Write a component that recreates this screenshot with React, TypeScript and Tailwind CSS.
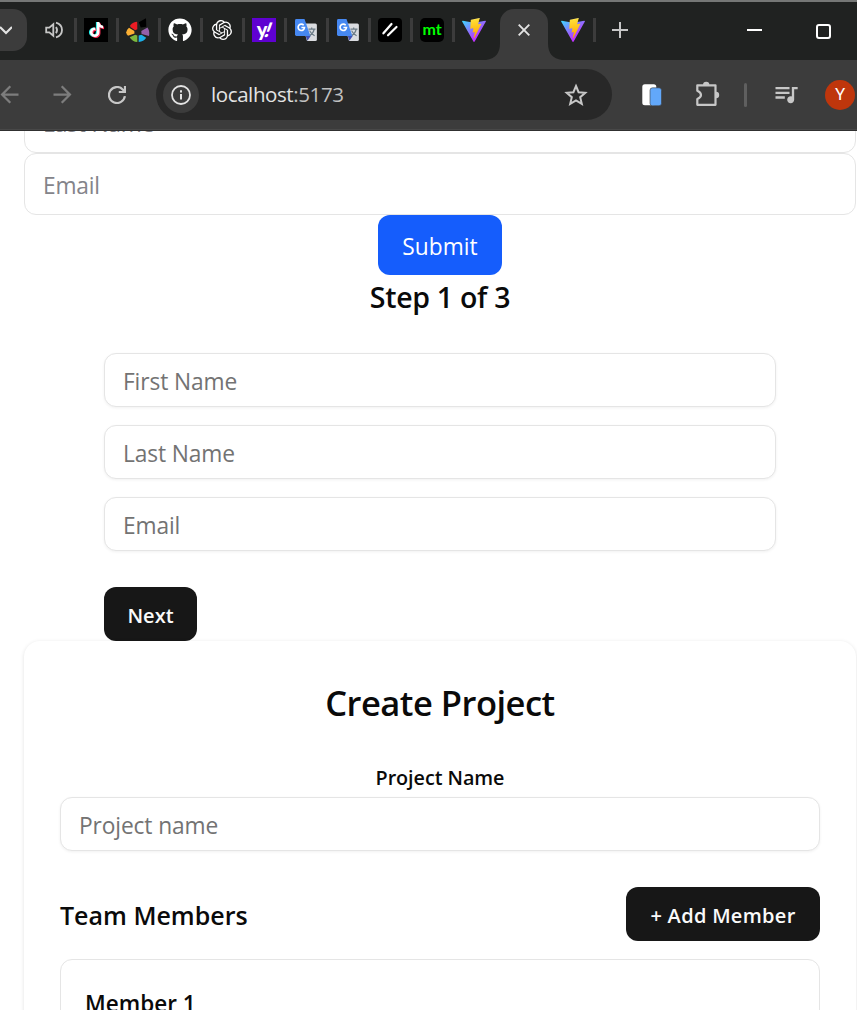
import type { ReactNode } from "react";
import { FaGithub, FaTiktok } from "react-icons/fa";
import { MdArrowBack, MdArrowForward, MdQueueMusic } from "react-icons/md";
import { SiOpenai } from "react-icons/si";

function ViteLogo({ id }: { id: string }) {
  return (
    <svg viewBox="0 0 256 257" className="size-6">
      <defs>
        <linearGradient id={`${id}-a`} x1="-.828%" x2="57.636%" y1="7.652%" y2="78.411%">
          <stop offset="0%" stopColor="#41D1FF" />
          <stop offset="100%" stopColor="#BD34FE" />
        </linearGradient>
        <linearGradient id={`${id}-b`} x1="43.376%" x2="50.316%" y1="2.242%" y2="89.03%">
          <stop offset="0%" stopColor="#FFEA83" />
          <stop offset="8.333%" stopColor="#FFDD35" />
          <stop offset="100%" stopColor="#FFA800" />
        </linearGradient>
      </defs>
      <path fill={`url(#${id}-a)`} d="M255.153 37.938L134.897 252.976c-2.483 4.44-8.862 4.466-11.382.048L.875 37.958c-2.746-4.814 1.371-10.646 6.827-9.67l120.385 21.517a6.537 6.537 0 0 0 2.322-.004l117.867-21.483c5.438-.991 9.574 4.796 6.877 9.62Z" />
      <path fill={`url(#${id}-b)`} d="M185.432.063L96.44 17.501a3.268 3.268 0 0 0-2.634 3.014l-5.474 92.456a3.268 3.268 0 0 0 3.997 3.378l24.777-5.718c2.318-.535 4.413 1.507 3.936 3.838l-7.361 36.047c-.495 2.426 1.782 4.5 4.151 3.78l15.304-4.649c2.372-.72 4.652 1.36 4.15 3.788l-11.698 56.621c-.732 3.542 3.979 5.473 5.943 2.437l1.313-2.028l72.516-144.72c1.215-2.423-.88-5.186-3.54-4.672l-25.505 4.922c-2.396.462-4.435-1.77-3.759-4.114l16.646-57.705c.677-2.35-1.37-4.583-3.769-4.113Z" />
    </svg>
  );
}

function TikTok() {
  return (
    <span className="relative block size-6 bg-black">
      <FaTiktok className="absolute left-[4.4px] top-[3.9px] size-[15px] text-[#25f4ee]" />
      <FaTiktok className="absolute left-[5.6px] top-[4.9px] size-[15px] text-[#fe2c55]" />
      <FaTiktok className="absolute left-[5px] top-[4.4px] size-[15px] text-white" />
    </span>
  );
}

function ColorWheel() {
  return (
    <svg viewBox="0 0 24 24" className="size-6">
      <path fill="#ed1c24" d="M4.3 7.2Q7 4 11.2 3.8L11.3 11.2L9.2 12.3L4.3 9Z" />
      <path fill="#000" d="M12.8 4.2L20 0.3L20.3 8.8L14.7 9.4Z" />
      <path fill="#9460a9" d="M15.300 12.900L21.500 9.500Q24 13.500 23 18L15.600 15.900Z" />
      <path fill="#fbb034" d="M.2 14.200Q.8 11.500 3 9.800L8.300 13L8.500 15.400L2 17.800Q.3 16.200.2 14.200Z" />
      <path fill="#7bb83d" d="M3.700 19.200L9.200 16.700L11.300 17.400V24Q6.500 23.800 3.700 19.200Z" />
      <path fill="#1cb0e8" d="M12.700 17.400L15.500 16.800L20.200 19.800Q17.800 23.800 12.700 24Z" />
    </svg>
  );
}

function Yahoo() {
  return (
    <span className="flex size-6 items-center justify-center bg-[#5f01d1] pb-[2px] font-['Lato',sans-serif] text-[20px] font-black leading-none tracking-[-1px] text-white">
      y<span className="skew-x-[-20deg]">!</span>
    </span>
  );
}

function Translate() {
  return (
    <svg viewBox="0 0 24 24" className="size-6">
      <path fill="#dadce0" d="M8 5.500h13.400a1.500 1.500 0 0 1 1.500 1.500v14.600a1.500 1.500 0 0 1-1.500 1.500H13Z" />
      <path fill="#3f51b5" d="M11.500 17.500H17l-3.600 5.200Z" />
      <path fill="#4688f1" d="M2.400 1h8.100l5.900 17H2.400A1.400 1.400 0 0 1 1 16.600V2.400A1.400 1.400 0 0 1 2.400 1Z" />
      <path fill="none" stroke="#fff" strokeWidth="1.600" d="M9.700 7.200A3.200 3.200 0 1 0 10.500 9.500H7.400" />
      <path fill="none" stroke="#6b7b86" strokeWidth="1.200" d="M14.500 11.100h7M17.700 9.500v1.600M20.200 11.100c-.5 3-2.300 5-4.300 6.400M15.600 12.600c1 2.500 3 4 5 5.200" />
    </svg>
  );
}

function Slashes() {
  return (
    <svg viewBox="0 0 24 24" className="size-6">
      <rect width="24" height="24" rx="4" fill="#000" />
      <path d="M5.400 15.300L13.500 6M10 17.300L18.500 9" stroke="#fff" strokeWidth="2.200" strokeLinecap="round" fill="none" />
    </svg>
  );
}

function Monkeytype() {
  return (
    <span className="flex size-6 items-center justify-center rounded-[5px] bg-black pb-[2px] font-['Lato',sans-serif] text-[16px] font-bold leading-none text-[#00ff00]">
      mt
    </span>
  );
}

function TabCell({ children }: { children: ReactNode }) {
  return (
    <div className="flex w-[42px] shrink-0 items-center gap-[7px]">
      <span className="h-6 w-[3px] bg-[#3c3c3c]" />
      {children}
    </div>
  );
}

function TabStrip() {
  return (
    <div className="h-[60px] border-t-2 border-[#757776] bg-[#202221]">
      <div className="flex h-[58px] w-full items-center pb-[2px]">
        <div className="flex h-[42px] w-[27px] shrink-0 items-center rounded-r-[14px] bg-[#3c3c3c]">
          <svg viewBox="0 0 12 10" className="h-[10px] w-3" fill="none" stroke="#e3e3e3" strokeWidth="2.200">
            <path d="M0 2L6 8L12 2" />
          </svg>
        </div>
        <svg viewBox="0 0 20 20" className="ml-[17px] mr-[10px] size-5 shrink-0" fill="none" stroke="#c7c7c7" strokeWidth="1.800">
          <path d="M2.200 7.700H5.300L9.300 4.200V15.800L5.300 12.400H2.200Z" />
          <path d="M12 6.900Q14.100 10 12 13.200M12 2.700C20 5.200 20 14.800 12 17.400" />
        </svg>
        <TabCell><TikTok /></TabCell>
        <TabCell><ColorWheel /></TabCell>
        <TabCell><FaGithub className="size-6 text-white" /></TabCell>
        <TabCell><SiOpenai className="mx-[2px] size-5 text-white" /></TabCell>
        <TabCell><Yahoo /></TabCell>
        <TabCell><Translate /></TabCell>
        <TabCell><Translate /></TabCell>
        <TabCell><Slashes /></TabCell>
        <TabCell><Monkeytype /></TabCell>
        <div className="flex w-[34px] shrink-0 items-center justify-between">
          <span className="h-6 w-[3px] bg-[#3c3c3c]" />
          <ViteLogo id="vite-one" />
        </div>
        <div className="relative flex h-[56px] w-[76px] shrink-0 items-center justify-center pr-px">
          <svg viewBox="0 0 76 51" className="absolute -bottom-[2px] left-0 h-[51px] w-[76px]">
            <path fill="#3c3c3c" d="M-1 51Q14 50 14 34V14A14 14 0 0 1 28 0H48A14 14 0 0 1 62 14V34Q62 50 77 51Z" />
          </svg>
          <svg viewBox="0 0 12 12" className="relative size-3" stroke="#e3e3e3" strokeWidth="1.900">
            <path d="M.7.7L11.300 11.300M11.300.7L.7 11.300" />
          </svg>
        </div>
        <div className="-ml-[1px] shrink-0"><ViteLogo id="vite-two" /></div>
        <span className="ml-2 h-6 w-[3px] shrink-0 bg-[#3c3c3c]" />
        <svg viewBox="0 0 16 16" className="ml-4 size-4 shrink-0" stroke="#c7c7c7" strokeWidth="2">
          <path d="M0 8H16M8 0V16" />
        </svg>
        <span className="ml-[119px] h-[2px] w-[15px] shrink-0 bg-white" />
        <span className="ml-[54px] mt-[2px] size-[15px] shrink-0 rounded-[3px] border-2 border-white" />
      </div>
    </div>
  );
}

function Toolbar() {
  return (
    <div className="h-[71px] border-b border-[#303030] bg-[#3c3c3c]">
      <div className="flex h-[70px] items-center border-b border-[#484848]">
        <MdArrowBack className="-ml-[4px] size-[27px] shrink-0 text-[#7d7d7d]" />
        <MdArrowForward className="ml-[26px] size-[27px] shrink-0 text-[#7d7d7d]" />
        <svg viewBox="0 0 18 18" className="ml-[32px] size-[18px] shrink-0" fill="none" stroke="#c7c7c7" strokeWidth="2.200">
          <path d="M16.900 10.200A8 8 0 1 1 14.700 3.400L17 5.800M17 0V6H10.800" />
        </svg>
        <div className="ml-[30px] flex h-[51px] w-[456px] shrink-0 items-center rounded-full bg-[#282828] pl-[7px] pr-6">
          <span className="flex size-9 items-center justify-center rounded-full bg-[#3c3c3c]">
            <svg viewBox="0 0 20 20" className="size-5" fill="none" stroke="#e3e3e3" strokeWidth="1.800">
              <circle cx="10" cy="10" r="9" />
              <path d="M10 9V14.500M10 5.200V7.400" strokeWidth="2" />
            </svg>
          </span>
          <span className="ml-3 pb-[2px] text-[20.500px] leading-6 tracking-[-0.400px] text-[#e3e3e3]">
            localhost<span className="text-[#c0c0c0]">:5173</span>
          </span>
          <svg viewBox="0 0 24 24" className="ml-auto size-6" fill="none" stroke="#c7c7c7" strokeWidth="2">
            <path d="M12 3L14.600 9.200L21.300 9.800L16.200 14.200L17.800 20.800L12 17.300L6.200 20.800L7.800 14.200L2.700 9.800L9.400 9.200Z" />
          </svg>
        </div>
        <svg viewBox="0 0 20 22" className="ml-[30px] h-[22px] w-5 shrink-0">
          <rect width="14" height="21" x=".3" y=".3" rx="2.500" fill="#fff" />
          <rect width="11.500" height="18" x="8" y="3.800" rx="2.500" fill="#62a8fa" stroke="#3c3c3c" strokeWidth=".6" />
        </svg>
        <svg viewBox="0 0 26 26" className="mb-[2px] ml-[33px] size-[26px] shrink-0">
          <path fill="none" stroke="#c7c7c7" strokeWidth="2.200" strokeLinejoin="round" d="M2.300 4.300H20.500V23.800H2.300V18Q6 16.500 6 14Q6 11.500 2.300 9.800Z" />
          <path fill="#c7c7c7" d="M8 4A3.200 3.200 0 0 1 14.400 4ZM21 10.800A3.200 3.200 0 0 1 21 17.200Z" />
        </svg>
        <span className="ml-[23px] h-6 w-[3px] shrink-0 rounded-full bg-[#5f5f5f]" />
        <MdQueueMusic className="mb-[2px] ml-[25px] size-[28px] shrink-0 text-[#c7c7c7]" />
        <span className="ml-[25px] flex size-[30px] shrink-0 items-center justify-center rounded-full bg-[#bf360c] pt-px font-['Roboto',sans-serif] text-[17px] text-white">Y</span>
      </div>
    </div>
  );
}

const fieldClass =
  "block h-[54px] w-full rounded-xl border border-[#e5e5e5] bg-white px-[18px] pt-[3px] text-[22.750px] tracking-[-0.120px] placeholder:text-[#737373] shadow-[0_1px_3px_rgba(0,0,0,0.06)] outline-none";
const largeFieldClass =
  "block h-[62px] w-full shrink-0 rounded-xl border border-[#e5e5e5] bg-white px-[18px] pt-[3px] text-[22.750px] tracking-[-0.200px] placeholder:text-[#84848a] outline-none";
const darkButtonClass =
  "flex h-[54px] items-center justify-center rounded-xl bg-[#171717] pt-[4px] text-[20px] font-semibold text-[#fafafa]";

export default function App() {
  return (
    <div className="flex h-[1010px] w-[857px] flex-col overflow-hidden bg-white font-['Open_Sans','Noto_Sans',sans-serif] text-[#0a0a0a]">
      <header className="shrink-0">
        <TabStrip />
        <Toolbar />
      </header>
      <main className="flex-1 overflow-hidden pl-6 pr-px">
        <div className="-mt-10 flex flex-col items-center">
          <input className={largeFieldClass} placeholder="Last Name" />
          <input className={largeFieldClass} placeholder="Email" />
          <button className="h-[60px] w-[124px] rounded-xl bg-[#155dfc] pt-[4px] text-[22.750px] text-white">Submit</button>
        </div>
        <section className="mx-20">
          <h2 className="h-[78px] text-center text-[28.500px] font-semibold leading-[44px] tracking-[-0.300px]">Step 1 of 3</h2>
          <div className="flex flex-col gap-[18px]">
            <input className={fieldClass} placeholder="First Name" />
            <input className={fieldClass} placeholder="Last Name" />
            <input className={fieldClass} placeholder="Email" />
          </div>
          <button className={`${darkButtonClass} mt-9 w-[93px]`}>Next</button>
        </section>
        <section className="h-[600px] rounded-2xl px-9 shadow-[0_1px_4px_rgba(0,0,0,0.12)]">
          <h1 className="h-[125px] pt-[35px] text-center text-[34.500px] font-semibold leading-[54px] tracking-[-0.500px]">Create Project</h1>
          <label className="block h-[31px] text-center text-[19.750px] font-semibold leading-[24px] tracking-[-0.050px]">Project Name</label>
          <input className={fieldClass} placeholder="Project name" />
          <div className="mt-9 flex items-center justify-between">
            <h3 className="pt-[4px] text-[25px] font-semibold">Team Members</h3>
            <button className={`${darkButtonClass} w-[194px] tracking-[0.300px]`}>+ Add Member</button>
          </div>
          <div className="mt-[18px] h-[200px] rounded-xl border border-[#e5e5e5] px-6 pt-[26px]">
            <h4 className="text-[22.500px] font-semibold leading-9">Member 1</h4>
          </div>
        </section>
      </main>
    </div>
  );
}
